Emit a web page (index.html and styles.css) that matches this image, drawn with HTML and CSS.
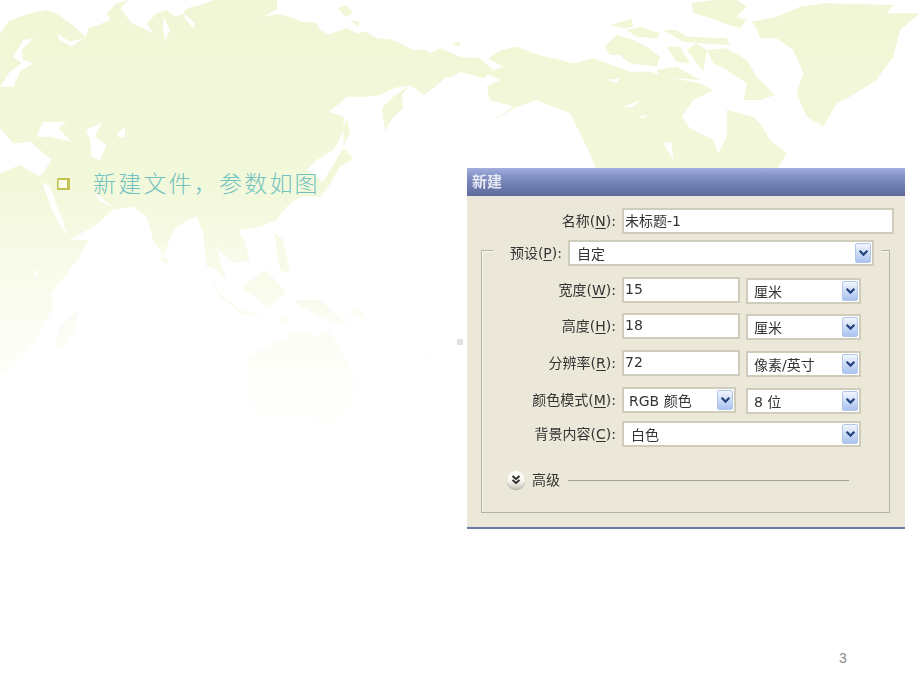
FILE: index.html
```html
<!DOCTYPE html>
<html lang="zh">
<head>
<meta charset="utf-8">
<title>新建文件</title>
<link rel="stylesheet" href="styles.css">
</head>
<body>
<main class="slide">
  <svg class="map" viewBox="0 0 2760 2070" aria-hidden="true">
    <defs>
      <linearGradient id="land" gradientUnits="userSpaceOnUse" x1="0" y1="0" x2="0" y2="1200">
        <stop offset="0" stop-color="#f0f7d6"/>
        <stop offset="0.45" stop-color="#f2f8da"/>
        <stop offset="0.65" stop-color="#f8fbe9"/>
        <stop offset="0.85" stop-color="#fcfdf5"/>
        <stop offset="1" stop-color="#feFffb"/>
      </linearGradient>
    </defs>
    <g class="land">
      <!-- Eurasia and Africa -->
      <path d="M0 100 L25 65 L60 50 L100 38 L140 30 L175 45 L205 65 L240 95 L258 112 L265 85 L295 75 L330 60 L320 40 L350 10 L385 0 L362 25 L395 70 L430 85 L460 100 L440 70 L470 40 L500 30 L525 50 L550 40 L560 25 L600 15 L640 0 L830 0 L832 28 L790 50 L830 42 L870 50 L905 65 L950 70 L960 90 L985 103 L1010 95 L1040 85 L1070 100 L1100 95 L1130 115 L1170 118 L1200 130 L1240 150 L1280 150 L1290 160 L1320 145 L1380 170 L1440 175 L1480 210 L1450 235 L1380 215 L1350 235 L1340 230 L1300 265 L1270 285 L1230 255 L1180 265 L1140 285 L1100 290 L1040 290 L1020 310 L985 335 L1020 345 L1032 352 L1030 390 L1015 425 L1000 450 L950 480 L920 510 L945 525 L960 540 L985 560 L960 590 L900 590 L860 620 L830 660 L780 680 L715 690 L735 730 L750 780 L700 790 L665 760 L650 740 L680 850 L650 810 L620 800 L610 700 L590 650 L555 665 L520 690 L490 770 L460 720 L440 650 L400 620 L340 630 L280 680 L210 720 L265 720 L240 770 L155 880 L160 920 L110 1020 L60 1080 L0 1125 Z"/>
      <!-- Kamchatka, Sakhalin, Japan -->
      <path d="M1145 325 L1180 290 L1230 255 L1205 285 L1210 325 L1180 350 L1155 392 Z"/>
      <path d="M1040 355 L1050 400 L1030 440 L1030 390 Z"/>
      <path d="M1030 445 L1060 475 L1020 500 L985 560 L950 575 L990 510 Z"/>
      <!-- Madagascar -->
      <path d="M235 930 L225 990 L185 1055 L165 1030 L180 980 Z"/>
      <!-- South-east Asia islands -->
      <path d="M620 800 L660 880 L720 930 L820 950 L720 940 L660 890 Z"/>
      <path d="M725 860 L800 810 L860 880 L800 925 L760 890 Z"/>
      <path d="M825 700 L850 720 L870 820 L840 810 L830 750 Z"/>
      <path d="M880 900 L960 900 L1050 985 L960 950 L900 920 Z"/>
      <path d="M830 960 L870 950 L850 970 Z"/>
      <path d="M1040 935 L1080 925 L1100 955 L1060 945 Z"/>
      <path d="M480 770 L510 780 L495 795 Z"/>
      <!-- Australia -->
      <path d="M740 1070 L800 1040 L900 990 L950 1010 L985 990 L1040 1080 L1070 1150 L1050 1230 L1000 1270 L900 1250 L760 1240 Z"/>
      <path d="M1270 1080 L1290 1060 L1280 1085 Z"/>
      <!-- Arctic Russia islands -->
      <path d="M1015 25 L1040 15 L1060 40 L1035 50 Z"/>
      <path d="M1050 60 L1080 65 L1075 80 Z"/>
      <path d="M1355 130 L1380 125 L1380 140 Z"/>
      <g transform="translate(1380 0)">
        <!-- North America -->
        <path d="M85 175 L125 150 L170 140 L235 165 L300 180 L340 190 L400 175 L440 190 L510 215 L570 215 L640 235 L720 250 L760 270 L700 300 L665 350 L690 385 L760 420 L775 460 L800 410 L800 330 L880 350 L900 370 L930 420 L980 460 L950 510 L410 510 L380 440 L330 340 L230 300 L170 320 L80 372 L160 320 L90 300 L80 260 L120 240 L75 220 L130 200 Z"/>
        <path d="M435 140 L470 105 L520 120 L560 140 L600 170 L590 200 L510 190 L480 165 L450 165 Z"/>
        <path d="M450 75 L515 58 L520 80 L490 85 Z"/>
        <path d="M500 90 L540 80 L600 100 L590 115 L530 110 Z"/>
        <path d="M610 90 L650 90 L680 110 L800 115 L810 135 L720 130 L670 125 Z"/>
        <path d="M695 10 L760 0 L830 0 L860 20 L830 50 L860 60 L840 85 L790 70 L740 50 L700 40 Z"/>
        <path d="M740 150 L800 145 L860 180 L890 230 L945 285 L900 300 L850 300 L860 250 L800 210 L760 190 Z"/>
        <path d="M620 140 L660 140 L690 190 L650 185 Z"/>
        <path d="M680 150 L710 130 L740 150 L730 215 L700 175 Z"/>
        <path d="M590 210 L650 200 L720 240 L650 235 L600 230 Z"/>
        <path d="M875 65 L950 50 L1020 20 L1100 10 L1300 15 L1280 40 L1380 40 L1320 90 L1300 170 L1270 210 L1250 240 L1170 290 L1130 310 L1090 380 L1040 350 L1010 280 L1030 220 L1000 150 L950 115 L900 115 L890 85 Z"/>
      </g>
    </g>
    <g class="sea">
      <path d="M100 115 L70 120 L40 170 L65 190 L30 215 L0 260 L40 260 L60 215 L100 190 L70 180 L65 150 Z"/>
      <path d="M170 100 L210 125 L250 115 L215 140 L180 120 Z"/>
      <path d="M490 50 L510 90 L495 125 L490 90 Z"/>
      <path d="M550 40 L585 70 L580 85 L555 55 Z"/>
      <path d="M108 410 L130 365 L200 365 L175 385 L215 425 L150 410 Z"/>
      <path d="M258 390 L305 370 L285 410 L320 435 L300 480 L275 470 L270 420 Z"/>
      <path d="M350 400 L375 380 L375 410 L355 412 Z"/>
      <path d="M0 385 L40 430 L90 425 L155 480 L120 530 L60 495 L0 520 Z"/>
      <path d="M125 545 L150 560 L205 710 L190 690 L160 640 Z"/>
      <path d="M285 580 L340 620 L300 605 Z"/>
      <path d="M100 815 L115 810 L105 835 Z"/>
      <g transform="translate(1380 0)">
        <path d="M440 240 L480 235 L470 248 Z"/>
        <path d="M490 320 L545 300 L515 322 Z"/>
        <path d="M530 350 L565 345 L550 355 Z"/>
        <path d="M610 430 L635 425 L640 480 Z"/>
        <path d="M820 240 L835 250 L820 262 Z"/>
      </g>
    </g>
  </svg>

  <span class="speck"></span>

  <p class="bullet-line">
    <svg class="bullet" viewBox="0 0 14 14" aria-hidden="true">
      <path class="bullet-shadow" d="M1 0H13V12H0V1Z"/>
      <rect class="bullet-face" x="1.5" y="2" width="8.5" height="8"/>
    </svg>
    <span class="bullet-text">新建文件，参数如图</span>
  </p>

  <section class="dialog">
    <h1 class="titlebar">新建</h1>
    <div class="name-row">
      <label class="label">名称(<u>N</u>):</label>
      <div class="field name-field">未标题-1</div>
    </div>
    <div class="group">
      <div class="preset-row">
        <label class="label preset-label">预设(<u>P</u>):</label>
        <div class="select preset-select"><span>自定</span><i class="drop"><svg viewBox="0 0 10 8"><path d="M1.5 1.5L5 5l3.5-3.5"/></svg></i></div>
      </div>
      <div class="grid">
        <label class="label">宽度(<u>W</u>):</label>
        <div class="field">15</div>
        <div class="select"><span>厘米</span><i class="drop"><svg viewBox="0 0 10 8"><path d="M1.5 1.5L5 5l3.5-3.5"/></svg></i></div>

        <label class="label">高度(<u>H</u>):</label>
        <div class="field">18</div>
        <div class="select"><span>厘米</span><i class="drop"><svg viewBox="0 0 10 8"><path d="M1.5 1.5L5 5l3.5-3.5"/></svg></i></div>

        <label class="label">分辨率(<u>R</u>):</label>
        <div class="field">72</div>
        <div class="select"><span>像素/英寸</span><i class="drop"><svg viewBox="0 0 10 8"><path d="M1.5 1.5L5 5l3.5-3.5"/></svg></i></div>

        <label class="label">颜色模式(<u>M</u>):</label>
        <div class="select mode-select"><span>RGB 颜色</span><i class="drop"><svg viewBox="0 0 10 8"><path d="M1.5 1.5L5 5l3.5-3.5"/></svg></i></div>
        <div class="select"><span>8 位</span><i class="drop"><svg viewBox="0 0 10 8"><path d="M1.5 1.5L5 5l3.5-3.5"/></svg></i></div>

        <label class="label">背景内容(<u>C</u>):</label>
        <div class="select wide-select"><span>白色</span><i class="drop"><svg viewBox="0 0 10 8"><path d="M1.5 1.5L5 5l3.5-3.5"/></svg></i></div>
      </div>
      <div class="advanced">
        <span class="round"><svg viewBox="0 0 10 10"><path d="M1.5 1L5 4l3.5-3M1.5 5L5 8l3.5-3"/></svg></span>
        <span class="advanced-text">高级</span>
        <span class="rule"></span>
      </div>
    </div>
  </section>

  <footer class="page-number">3</footer>
</main>
</body>
</html>
```

FILE: styles.css
```css
* { box-sizing: border-box; }

html, body {
  margin: 0;
  padding: 0;
  background: #fff;
}

.slide {
  position: relative;
  width: 920px;
  height: 690px;
  overflow: hidden;
  background: #fff;
  font-family: "DejaVu Sans", "Noto Sans CJK SC", sans-serif;
}

.map {
  position: absolute;
  left: 0;
  top: 0;
  width: 920px;
  height: 690px;
  filter: blur(0.5px);
}

.land { fill: url(#land); }
.sea { fill: #fff; }

.speck {
  position: absolute;
  left: 457px;
  top: 339px;
  width: 6px;
  height: 6px;
  background: #e2e2e2;
}

.bullet-line {
  position: absolute;
  left: 57px;
  top: 164px;
  margin: 0;
  display: flex;
  align-items: center;
  height: 36px;
}

.bullet {
  width: 14px;
  height: 14px;
  margin-right: 22px;
  margin-top: 5px;
}

.bullet-shadow { fill: #c2c351; }
.bullet-face { fill: #fafbea; }

.bullet-text {
  font-family: "Noto Sans CJK SC", sans-serif;
  font-weight: 300;
  font-size: 23px;
  letter-spacing: 2.2px;
  line-height: 36px;
  color: #72c3bf;
  white-space: nowrap;
}

.dialog {
  position: absolute;
  left: 467px;
  top: 168px;
  width: 438px;
  height: 361px;
  background: #ebe8d9;
  border-bottom: 2px solid #6c7aa6;
  filter: blur(0.35px);
  font-family: "DejaVu Sans", "Noto Sans CJK SC", sans-serif;
  font-size: 14px;
  color: #2e2e2e;
}

.titlebar {
  margin: 0;
  height: 28px;
  padding: 1px 0 0 5px;
  font-size: 15px;
  font-weight: 700;
  line-height: 26px;
  color: #e6e8f4;
  background: linear-gradient(#a3aedd 0, #8391c6 30%, #6b79ac 70%, #5d6a9b 100%);
}

.name-row {
  display: flex;
  align-items: center;
  justify-content: flex-end;
  gap: 6px;
  margin: 12px 11px 0 0;
}

.label {
  text-align: right;
  line-height: 26px;
  white-space: nowrap;
  color: #333;
}

.label u { text-decoration-thickness: 1px; text-underline-offset: 2px; }

.field,
.select {
  height: 26px;
  background: #fff;
  border: 2px solid #cfccbc;
  line-height: 20px;
  color: #333;
  white-space: nowrap;
}

.field { padding: 0 1px; width: 118px; }
.name-field { width: 272px; line-height: 23px; }

.select {
  display: flex;
  align-items: center;
  justify-content: space-between;
  padding: 1px 1px 1px 6px;
  width: 115px;
  margin-top: 1px;
}

.select span { padding-top: 2px; }

.drop {
  display: flex;
  align-items: center;
  justify-content: center;
  flex: none;
  width: 16px;
  height: 20px;
  border: 1px solid #b2c7e6;
  border-radius: 2px;
  background: linear-gradient(#f2f6fd, #c6d7f6 60%, #abc3f0);
}

.drop svg { width: 11px; height: 9px; }

.drop path {
  fill: none;
  stroke: #24437f;
  stroke-width: 2;
}

.group {
  margin: 16px 15px 0 14px;
  height: 263px;
  border: 1px solid #b5b3a4;
  box-shadow: inset 1px 1px 0 #f7f6ef;
}

.preset-row {
  display: flex;
  align-items: center;
  gap: 6px;
  width: 388px;
  margin: -11px 0 0 11px;
  padding-right: 7px;
  background: #ebe8d9;
}

.preset-label { width: 69px; }
.preset-select { width: 306px; margin-top: 0; padding-left: 7px; }

.grid {
  display: grid;
  grid-template-columns: 134px 118px 115px;
  grid-template-rows: 36px 37px 37px 34px 26px;
  column-gap: 6px;
  align-items: start;
  margin-top: 11px;
}

.mode-select { width: 114px; margin-top: 0; padding-left: 5px; }
.wide-select { grid-column: 2 / 4; width: 239px; margin-top: 0; padding-left: 7px; }

.advanced {
  display: flex;
  align-items: center;
  height: 18px;
  margin: 24px 0 0 25px;
}

.round {
  display: flex;
  align-items: center;
  justify-content: center;
  width: 18px;
  height: 18px;
  border-radius: 50%;
  background: linear-gradient(#ffffff, #f4f3ec 60%, #c8c6ba);
  box-shadow: 0 1px 1px #a5a396;
}

.round svg { width: 10px; height: 10px; }

.round path {
  fill: none;
  stroke: #2a2a2a;
  stroke-width: 1.8;
}

.advanced-text {
  margin-left: 7px;
  line-height: 18px;
  color: #333;
}

.rule {
  width: 281px;
  height: 1px;
  margin-left: 8px;
  background: #a5a392;
}

.page-number {
  position: absolute;
  left: 839px;
  top: 649px;
  font-family: "Liberation Sans", sans-serif;
  font-size: 14px;
  line-height: 18px;
  color: #8b8b8b;
}
```
